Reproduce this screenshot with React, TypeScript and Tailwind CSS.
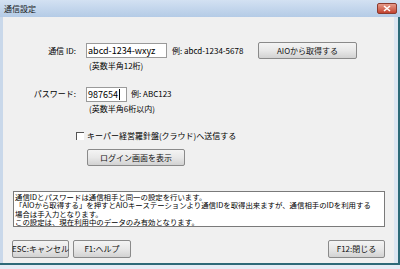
const font = { fontFamily: '"Noto Sans CJK JP", "DejaVu Sans", sans-serif' };

function Btn({ label, className = '' }: { label: string; className?: string }) {
  return (
    <button
      className={`flex items-center justify-center whitespace-nowrap rounded-[2px] border border-[#8a8a8a] bg-gradient-to-b from-[#f4f4f4] via-[#e8e8e8] to-[#d2d2d2] text-[8px] leading-none text-[#111] ${className}`}
    >
      {label}
    </button>
  );
}

export default function App() {
  return (
    <div className="flex h-[269px] w-[400px] flex-col overflow-hidden bg-[#f0f0f0] text-black" style={font}>
      {/* title bar */}
      <div className="flex h-[17px] items-center justify-between bg-gradient-to-b from-[#d3e1f2] to-[#b4cbe6] pl-[4px] pr-[3px]">
        <span className="text-[8px] leading-none text-[#1a1a1a]">通信設定</span>
        <div className="flex h-[11px] w-[20px] items-center justify-center rounded-[2px] border border-[#8b3a2e] bg-gradient-to-b from-[#e59a8a] to-[#c2412f]">
          <svg width="8" height="7" viewBox="0 0 8 7">
            <path d="M1 1 L7 6 M7 1 L1 6" stroke="#fff" strokeWidth="1.6" />
          </svg>
        </div>
      </div>

      <div className="flex flex-1">
        <div className="w-[3px] bg-[#c9d8ea]" />
        <div className="flex flex-1 flex-col whitespace-nowrap">
          {/* 通信ID */}
          <div className="mt-[25px] flex h-[17px] items-center">
            <span className="w-[73px] text-right text-[8px] leading-none">通信 ID:</span>
            <div className="ml-[10px] flex h-[15px] w-[81px] items-center border border-[#9a9a9a] bg-white pl-[1px] text-[9px] leading-none">
              abcd-1234-wxyz
            </div>
            <span className="ml-[5px] text-[8px] leading-none">例: abcd-1234-5678</span>
            <Btn label="AIOから取得する" className="ml-auto mr-[37px] h-[17px] w-[99px]" />
          </div>
          <div className="mt-[2px] pl-[86px] text-[8px] leading-[10px]">(英数半角12桁)</div>

          {/* パスワード */}
          <div className="mt-[15px] flex h-[16px] items-center">
            <span className="w-[73px] text-right text-[8px] leading-none">パスワード:</span>
            <div className="ml-[10px] flex h-[15px] w-[41px] items-center border border-[#9a9a9a] bg-white pl-[1px] text-[9px] leading-none">
              987654<span className="ml-[1px] h-[11px] w-px bg-black" />
            </div>
            <span className="ml-[4px] text-[8px] leading-none">例: ABC123</span>
          </div>
          <div className="mt-[2px] pl-[86px] text-[8px] leading-[10px]">(英数半角6桁以内)</div>

          {/* checkbox */}
          <div className="mt-[17px] flex h-[10px] items-center pl-[73px]">
            <div className="h-[8px] w-[8px] border-l border-t border-[#555] bg-white" />
            <span className="ml-[3px] text-[8px] leading-none">キーパー経営羅針盤(クラウド)へ送信する</span>
          </div>
          <div className="mt-[8px] pl-[84px]">
            <Btn label="ログイン画面を表示" className="h-[17px] w-[98px]" />
          </div>

          {/* note */}
          <div className="ml-[10px] mr-[9px] mt-[25px] h-[36px] overflow-hidden border border-[#7a7a7a] bg-white px-[1px] pt-[1px] text-[7.4px] leading-[8.4px]">
            <div>通信IDとパスワードは通信相手と同一の設定を行います。</div>
            <div>「AIOから取得する」を押すとAIOキーステーションより通信IDを取得出来ますが、通信相手のIDを利用する</div>
            <div>場合は手入力となります。</div>
            <div>この設定は、現在利用中のデータのみ有効となります。</div>
          </div>

          {/* bottom buttons */}
          <div className="mt-[13px] flex items-center pl-[9px] pr-[9px]">
            <Btn label="ESC:キャンセル" className="h-[18px] w-[57px]" />
            <Btn label="F1:ヘルプ" className="ml-[4px] h-[18px] w-[58px]" />
            <Btn label="F12:閉じる" className="ml-auto h-[18px] w-[57px]" />
          </div>
        </div>
        <div className="w-[4px] bg-[#dce6f2]" />
        <div className="w-[2px] bg-[#2d6a78]" />
      </div>
      <div className="h-[2px] bg-[#2d6a78]" />
      <div className="h-[4px] bg-[#e4ecf5]" />
    </div>
  );
}
